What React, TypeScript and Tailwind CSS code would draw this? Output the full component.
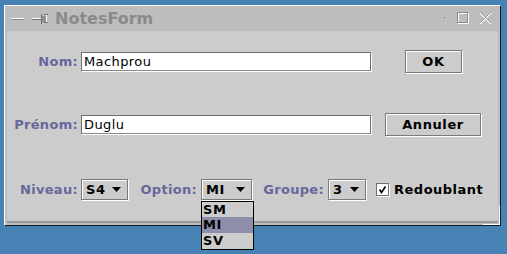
import React from "react";

const font = { fontFamily: '"DejaVu Sans", "Liberation Sans", sans-serif' };

function Etched({ className, children }: { className?: string; children?: React.ReactNode }) {
  return (
    <div
      className={
        "border border-[#7a7a7a] shadow-[inset_1px_1px_0_#ffffff,1px_1px_0_#ffffff] " + (className ?? "")
      }
    >
      {children}
    </div>
  );
}

function Label({ text, w }: { text: string; w: string }) {
  return (
    <div className={`${w} shrink-0 text-right text-[13px] font-bold tracking-[0.3px] text-[#67679b] leading-none`}>
      {text}
    </div>
  );
}

function Field({ value }: { value: string }) {
  return (
    <div className="w-[290px] h-[19px] bg-white border border-[#6f6f6f] border-b-[#8a8a8a] shadow-[1px_1px_0_#ffffff] flex items-center pl-[2px] text-[13px] tracking-[0.4px] text-black leading-none">
      {value}
    </div>
  );
}

function Arrow() {
  return (
    <svg width="9" height="5" viewBox="0 0 9 5" className="shrink-0">
      <polygon points="0,0 9,0 4.5,5" fill="#000" />
    </svg>
  );
}

function Combo({ value, w }: { value: string; w: string }) {
  return (
    <Etched className={`${w} h-[21px] flex items-center justify-between pl-[4px] pr-[6px] bg-[#cccccc]`}>
      <span className="text-[13px] font-bold tracking-[0.6px] leading-none text-black">{value}</span>
      <Arrow />
    </Etched>
  );
}

export default function App() {
  return (
    <div style={font} className="w-[507px] h-[254px] bg-[#4682b4] pt-[5px] pl-[4px] overflow-hidden">
      <div className="relative w-[497px] h-[221px] bg-[#bdbdbd] border-l border-t border-white border-r border-r-[#1a1a1a] border-b border-b-[#1a1a1a] flex flex-col">
        {/* title bar */}
        <div className="h-[25px] flex items-center pl-[5px] pr-[6px]">
          <svg width="40" height="12" viewBox="0 0 40 12" className="shrink-0">
            <line x1="1" y1="5.5" x2="14" y2="5.5" stroke="#ffffff" strokeWidth="1" />
            <line x1="1" y1="6.5" x2="14" y2="6.5" stroke="#8a8a8a" strokeWidth="1" />
            <line x1="22" y1="5.5" x2="31" y2="5.5" stroke="#ffffff" />
            <line x1="22" y1="6.5" x2="31" y2="6.5" stroke="#707070" />
            <rect x="31" y="3" width="5" height="6" fill="#909090" />
            <line x1="31.5" y1="1" x2="31.5" y2="11" stroke="#707070" />
            <line x1="36.5" y1="2" x2="36.5" y2="10" stroke="#ffffff" />
            <line x1="34" y1="1.5" x2="38" y2="1.5" stroke="#707070" />
            <line x1="34" y1="9.5" x2="38" y2="9.5" stroke="#707070" />
          </svg>
          <div className="ml-[5px] text-[16px] font-bold text-[#8a8a8a] leading-none">NotesForm</div>
          <div className="flex-1" />
          <svg width="50" height="14" viewBox="0 0 50 14" className="shrink-0">
            <rect x="0" y="5" width="2" height="2" fill="#8a8a8a" />
            <rect x="1" y="6" width="1" height="1" fill="#ffffff" />
            <rect x="14.5" y="1.5" width="10" height="10" fill="none" stroke="#ffffff" />
            <rect x="13.5" y="0.5" width="10" height="10" fill="none" stroke="#8a8a8a" />
            <line x1="36" y1="1" x2="47" y2="12" stroke="#ffffff" strokeWidth="1.3" />
            <line x1="47" y1="1" x2="36" y2="12" stroke="#ffffff" strokeWidth="1.3" />
            <line x1="36" y1="0" x2="47" y2="11" stroke="#8a8a8a" strokeWidth="0.8" />
            <line x1="47" y1="0" x2="36" y2="11" stroke="#8a8a8a" strokeWidth="0.8" />
          </svg>
        </div>
        {/* content */}
        <div className="mx-[2px] flex-1 mb-[2px] bg-[#cccccc] border-b-[2px] border-b-[#9a9a9a] pt-[19px] flex flex-col">
          <div className="flex items-center h-[23px]">
            <Label text="Nom:" w="w-[71px]" />
            <div className="ml-[3px]"><Field value="Machprou" /></div>
            <Etched className="ml-[34px] w-[57px] h-[23px] flex items-center justify-center text-[13px] font-bold tracking-[0.6px] leading-none text-black bg-[#cccccc]">
              OK
            </Etched>
          </div>
          <div className="flex items-center h-[23px] mt-[40px]">
            <Label text="Prénom:" w="w-[71px]" />
            <div className="ml-[3px]"><Field value="Duglu" /></div>
            <Etched className="ml-[14px] w-[96px] h-[23px] flex items-center justify-center text-[13px] font-bold tracking-[0.6px] leading-none text-black bg-[#cccccc]">
              Annuler
            </Etched>
          </div>
          <div className="flex items-center h-[22px] mt-[42px]">
            <Label text="Niveau:" w="w-[71px]" />
            <div className="ml-[3px]"><Combo value="S4" w="w-[47px]" /></div>
            <Label text="Option:" w="w-[69px]" />
            <div className="ml-[4px] relative">
              <Combo value="MI" w="w-[51px]" />
              <div className="absolute left-0 top-[22px] w-[53px] bg-[#cccccc] border border-black z-10 flex flex-col text-[13px] font-bold tracking-[0.6px] leading-none text-black">
                <div className="h-[15px] flex items-center pl-[1px]">SM</div>
                <div className="h-[16px] flex items-center pl-[1px] bg-[#8e8eaa]">MI</div>
                <div className="h-[16px] flex items-center pl-[1px]">SV</div>
              </div>
            </div>
            <Label text="Groupe:" w="w-[72px]" />
            <div className="ml-[4px]"><Combo value="3" w="w-[38px]" /></div>
            <div className="ml-[10px] w-[13px] h-[13px] bg-white border border-[#6f6f6f] shadow-[1px_1px_0_#ffffff] flex items-center justify-center">
              <svg width="9" height="9" viewBox="0 0 9 9">
                <polyline points="1.5,4.5 3.5,7.5 7.5,1.5" fill="none" stroke="#000" strokeWidth="1.6" />
              </svg>
            </div>
            <div className="ml-[5px] text-[13px] font-bold tracking-[0.5px] leading-none text-black">Redoublant</div>
          </div>
        </div>
        {/* resize corner */}
        <div className="absolute right-[0px] bottom-[0px] w-[17px] h-[19px] border-r border-b border-white" />
      </div>
    </div>
  );
}
